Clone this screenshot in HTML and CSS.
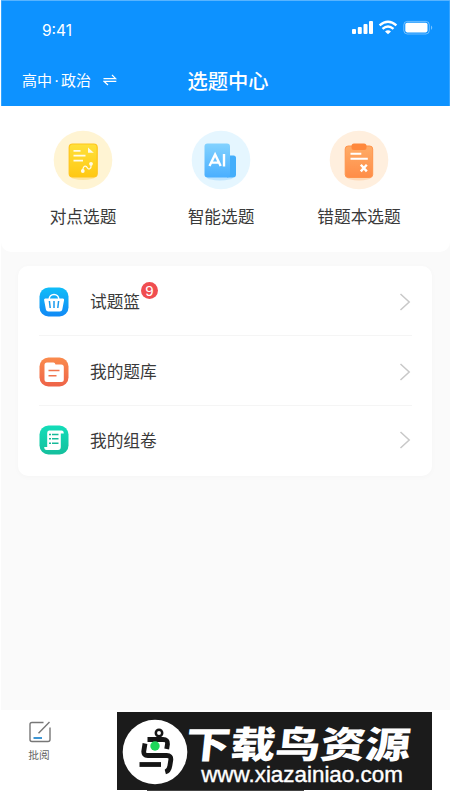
FILE: index.html
```html
<!DOCTYPE html>
<html lang="zh-CN">
<head>
<meta charset="utf-8">
<title>选题中心</title>
<link rel="stylesheet" href="styles.css">
</head>
<body>
<div class="app">
  <header class="header">
    <div class="status">
      <span class="time">9:41</span>
      <svg class="signals" width="82" height="16" viewBox="0 0 82 16" fill="#fff">
        <rect x="0" y="9" width="4" height="5" rx="1"/><rect x="5.8" y="7" width="4" height="7" rx="1"/><rect x="11.5" y="4" width="4" height="10" rx="1"/><rect x="17" y="1" width="4" height="13" rx="1"/>
        <g fill="none" stroke="#fff" stroke-width="2.4"><path d="M27.6 5.4q8.4-7.4 16.8 0M30.5 8.8q5.5-4.6 11 0"/></g>
        <path d="M33 11.4q3-2.3 6 0l-3 2.9z"/>
        <rect x="51.8" y="1.4" width="25.5" height="12.6" rx="3.5" fill="none" stroke="#fff" stroke-opacity=".4"/>
        <rect x="53.3" y="2.8" width="22.2" height="9.6" rx="1.8"/><path d="M79 5.5q2.5 2 0 4.5z" opacity=".45"/>
      </svg>
    </div>
    <div class="titlebar">
      <div class="subject"><span>高中<i class="dot">·</i>政治</span>
        <svg width="14" height="12" viewBox="0 0 14 12" fill="none" stroke="#fff" stroke-width="1.2"><path d="M.5 4.7h12.2L9 1M13.3 7.3H1L5 11"/></svg>
      </div>
      <h1>选题中心</h1>
    </div>
  </header>

  <section class="modes">
    <div class="mode">
      <svg width="60" height="60" viewBox="0 0 60 60">
        <defs><linearGradient id="gy" x2="0" y2="1"><stop stop-color="#ffe13c"/><stop offset="1" stop-color="#ffc812"/></linearGradient></defs>
        <circle cx="30" cy="30" r="29.3" fill="#fff4d3"/>
        <ellipse cx="30" cy="47" rx="12" ry="3" fill="#ffe49a"/>
        <rect x="16.2" y="14" width="28" height="33" rx="3.5" fill="url(#gy)" stroke="#ffc51b" stroke-width="1.2"/>
        <path d="M35 17.5v5.3h5.8z" fill="#fffbe8"/>
        <g fill="none" stroke="#fffbe8" stroke-width="1.8"><path d="M20.5 20.8h7M20.5 25.6h12M20.5 30.7h9.5"/><path d="M29.5 41c1-7 4-5 5-3s4 1 3.600-3" stroke-width="1.200"/></g>
        <circle cx="29.800" cy="41" r="1.900" fill="#fffbe8"/><circle cx="38" cy="33.800" r="1.900" fill="#fffbe8"/>
      </svg>
      <span>对点选题</span>
    </div>
    <div class="mode">
      <svg width="60" height="60" viewBox="0 0 60 60">
        <defs><linearGradient id="gb" x2="0" y2="1"><stop stop-color="#82d2ff"/><stop offset="1" stop-color="#4aafff"/></linearGradient></defs>
        <circle cx="30" cy="30" r="29.300" fill="#e5f6ff"/>
        <ellipse cx="29" cy="47.500" rx="13" ry="3" fill="#bde4ff"/>
        <path d="M36 25.500h6.500q2.500 0 2.500 2.500v16.500q0 3-3 3H36z" fill="#44aefb"/>
        <rect x="13.500" y="13.500" width="25.500" height="34" rx="3" fill="url(#gb)"/>
        <path d="M18.500 36l5.600-11.500L29.700 36M20.500 32.600h7.300M33 24v12.400" fill="none" stroke="#fff" stroke-width="2.400"/>
      </svg>
      <span>智能选题</span>
    </div>
    <div class="mode">
      <svg width="60" height="60" viewBox="0 0 60 60">
        <defs><linearGradient id="go" x2="0" y2="1"><stop stop-color="#ffac67"/><stop offset="1" stop-color="#ff8d48"/></linearGradient></defs>
        <circle cx="30" cy="30" r="29.300" fill="#ffefde"/>
        <ellipse cx="30" cy="47.500" rx="12" ry="3" fill="#ffd7b4"/>
        <rect x="16.200" y="16" width="27.500" height="31.500" rx="3" fill="url(#go)" stroke="#ff944c"/>
        <rect x="22.500" y="13.500" width="15" height="6.500" rx="2.500" fill="#ff883c"/>
        <g fill="none" stroke="#fff" stroke-width="2"><path d="M21.500 23.700h10.800M21.500 28.800h17.300"/><path d="M31.800 34.800l6 6.600M37.800 34.800l-6 6.600" stroke-width="2.400"/></g>
      </svg>
      <span>错题本选题</span>
    </div>
  </section>

  <main class="content">
    <div class="card">
      <div class="row">
        <svg class="ico" width="30" height="30" viewBox="0 0 30 30">
          <defs><linearGradient id="r1" x2="0" y2="1"><stop stop-color="#10bdf8"/><stop offset="1" stop-color="#1189f5"/></linearGradient></defs>
          <rect x=".5" y=".5" width="29" height="29" rx="9" fill="url(#r1)"/>
          <path d="M10 13C10 5.500 20 5.500 20 13" fill="none" stroke="#fff" stroke-width="1.500"/>
          <path d="M6.300 11.500h17.600q1.500 0 1.200 1.500l-1.800 9.500q-.4 2-2.500 2H9.400q-2.100 0-2.500-2L5.100 13q-.3-1.500 1.200-1.500z" fill="#fff"/>
          <path d="M10.400 14l.8 7M15 14v7M19.600 14l-.8 7" stroke="#1899ee" stroke-width="1.500"/>
        </svg>
        <span class="label">试题篮<b class="badge">9</b></span>
        <svg class="chev" width="12" height="18" viewBox="0 0 12 18"><path d="M1.500 1l8.700 8-8.700 8"/></svg>
      </div>
      <div class="row">
        <svg class="ico" width="30" height="30" viewBox="0 0 30 30">
          <defs><linearGradient id="r2" x2="0" y2="1"><stop stop-color="#fa8b4d"/><stop offset="1" stop-color="#ee6348"/></linearGradient></defs>
          <rect x=".5" y=".5" width="29" height="29" rx="9" fill="url(#r2)"/>
          <path d="M8 5.500h6.500q1.500 0 2 2h5.800q2.500 0 2.500 2.500v12.500q0 2.500-2.500 2.500H8q-2.500 0-2.500-2.500V8Q5.500 5.500 8 5.500z" fill="#fff"/>
          <path d="M9.500 13.500h11M9.500 18.800h8" stroke="#f0734c" stroke-width="1.600"/>
        </svg>
        <span class="label">我的题库</span>
        <svg class="chev" width="12" height="18" viewBox="0 0 12 18"><path d="M1.500 1l8.700 8-8.700 8"/></svg>
      </div>
      <div class="row">
        <svg class="ico" width="30" height="30" viewBox="0 0 30 30">
          <defs><linearGradient id="r3" x2="0" y2="1"><stop stop-color="#13ddb9"/><stop offset="1" stop-color="#15bf9d"/></linearGradient></defs>
          <rect x=".5" y=".5" width="29" height="29" rx="9" fill="url(#r3)"/>
          <path d="M10 5.500h12.500q2.300 0 2.300 3h-3V22q0 3-2.800 3H7.500q-2.300 0-2.300-3h3V8q0-2.500 1.800-2.500z" fill="#fff"/>
          <path d="M10 9.500h2m1 0h6.500M10 13.800h2m1 0h6.500M10 18.200h2m1 0h6.500" stroke="#16b999" stroke-width="1.400"/>
        </svg>
        <span class="label">我的组卷</span>
        <svg class="chev" width="12" height="18" viewBox="0 0 12 18"><path d="M1.500 1l8.700 8-8.700 8"/></svg>
      </div>
    </div>
  </main>

  <footer class="footer">
    <div class="tab">
      <svg width="24" height="24" viewBox="0 0 24 24" fill="none" stroke="#777" stroke-width="1.400"><path d="M15.500 2.500H4Q2 2.500 2 4.500v15q0 2 2 2h16q2 0 2-2V7.500"/><path d="M10.500 13.200L21.500 2"/><path d="M5.500 18H14" stroke="#2789cf" stroke-width="1.800"/></svg>
      <span>批阅</span>
    </div>
    <div class="banner">
      <svg class="logo" width="66" height="66" viewBox="0 0 66 66">
        <circle cx="33" cy="33" r="32.300" fill="#fff"/>
        <g fill="none" stroke="#151515" stroke-width="4.800"><path d="M25.500 20.500H41q5 0 4.500 4.500l-.8 5"/><path d="M23 24.500l-1.200 7.500q-.5 4.500 4 4.500h19q4.500 0 4 4.500l-1 6q-.7 5-4.500 6"/><path d="M17.500 45.500H39"/></g>
        <circle cx="37" cy="14" r="3.200" fill="#fff" stroke="#151515" stroke-width="2.500"/>
        <circle cx="33" cy="27" r="4.700" fill="#1ed65a"/>
      </svg>
      <div class="brand"><strong>下载鸟资源</strong><span>www.xiazainiao.com</span></div>
    </div>
  </footer>
</div>
</body>
</html>
```
FILE: styles.css
```css
* { box-sizing: border-box; }
body { margin: 0; background: #fff; color: #3a3a3a; font-family: "Liberation Sans", "Noto Sans CJK SC", sans-serif; }
svg { display: block; flex: none; }
.app { width: 450px; height: 800px; display: flex; flex-direction: column; overflow: hidden; background: #fafafa; border-left: 1px solid #fff; }
.header { height: 106px; flex: none; background: #0d92ff; border-top: 1px solid #58b4ff; color: #fff; box-shadow: inset 1px 0 #35a4ff, inset -1px 0 #35a4ff; }
.status { height: 53px; padding: 6px 16px 0 41px; display: flex; align-items: center; justify-content: space-between; }
.time { font-family: Inter, sans-serif; font-size: 15.5px; }
.signals { margin-top: -5px; }
.titlebar { height: 52px; display: grid; grid-template-columns: 1fr 100px 1fr; align-items: center; }
.subject { display: flex; align-items: center; gap: 12px; padding-left: 21px; font-family: "Noto Sans CJK SC", sans-serif; font-size: 15px; line-height: 22px; }
.dot { display: inline-block; width: 9px; font: 400 17px/20px "Liberation Sans", sans-serif; text-align: center; }
.titlebar h1 { margin: 0; font: 500 20.3px/30px "Noto Sans CJK SC", sans-serif; white-space: nowrap; text-align: center; padding-left: 5px; }
.modes { height: 146px; flex: none; background: #fff; border-radius: 0 0 10px 10px; padding: 24px 22px 0 13px; display: grid; grid-template-columns: repeat(3, 1fr); }
.mode { display: flex; flex-direction: column; align-items: center; gap: 14px; font: 400 16.7px/25px "Noto Sans CJK SC", sans-serif; }
.content { flex: 1; padding: 14px 18px 0 17px; }
.card { height: 210px; border-radius: 10px; background: #fff; box-shadow: 0 1px 6px rgba(0,0,0,.025); padding: 0 20px 0 21px; display: grid; grid-template-rows: 70px 70px 70px; }
.row { display: flex; align-items: center; border-bottom: 1px solid #f5f5f5; padding-top: 2px; }
.row:last-child { border: 0; padding: 0 0 2px; }
.label { position: relative; margin-left: 21px; font: 400 16.7px/25px "Noto Sans CJK SC", sans-serif; }
.badge { position: absolute; left: 51px; top: -7px; width: 17px; height: 17px; border-radius: 50%; background: #f04d50; color: #fff; font: 400 15px/17px "Liberation Sans", sans-serif; text-align: center; }
.chev { margin-left: auto; margin-right: 1px; fill: none; stroke: #c8c8c8; stroke-width: 1.5; }
.footer { height: 90px; flex: none; background: #fff; display: flex; align-items: flex-start; }
.tab { width: 76px; padding-top: 10px; display: flex; flex-direction: column; align-items: center; gap: 2px; color: #666; font: 400 10.7px/18px "Noto Sans CJK SC", sans-serif; }
.tab svg { transform: translateX(1px); }
.banner { width: 315px; height: 78px; margin: 2px 0 0 40px; background: #1b1b1b; display: flex; padding: 7px 0 0 5px; }
.brand { color: #fff; width: 234px; margin-left: -3px; display: flex; flex-direction: column; align-items: center; }
.brand strong { font: 900 45px/40px "Noto Sans CJK SC", sans-serif; white-space: nowrap; transform: translate(-3px, 3px) skewX(-6deg) scaleY(.82); }
.brand span { font: 400 22.4px/24px "Liberation Sans", sans-serif; -webkit-text-stroke: .4px #fff; margin-top: 4px; }
.banner::after { content: ""; position: absolute; left: 147px; top: 790px; width: 157px; height: 1px; background: #444; }
```
